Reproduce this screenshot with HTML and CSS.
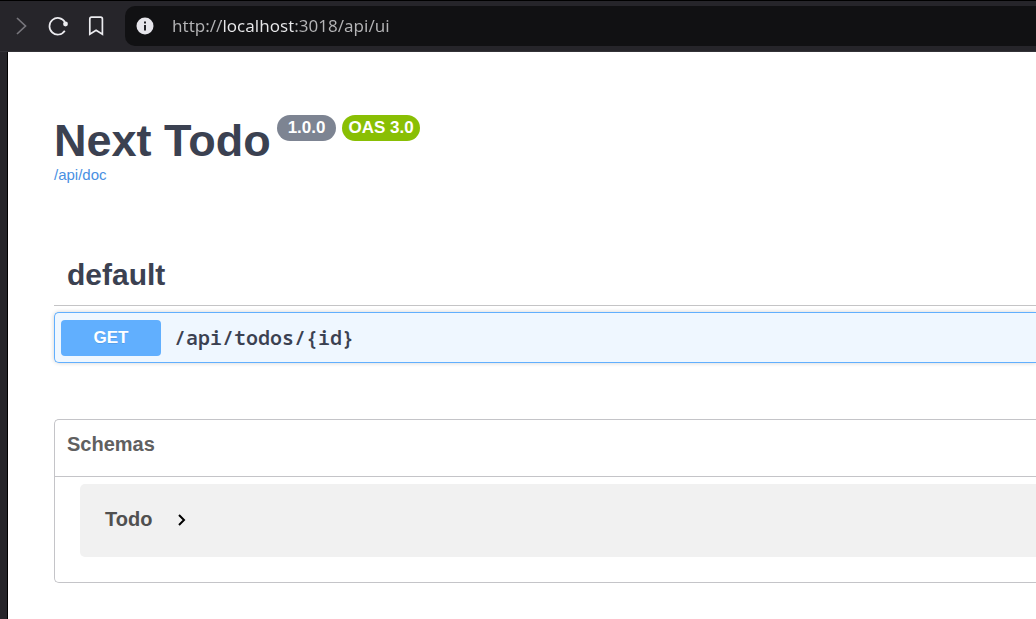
FILE: index.html
```html
<!DOCTYPE html>
<html lang="en">
<head>
<meta charset="utf-8">
<meta name="viewport" content="width=device-width, initial-scale=1">
<title>Next Todo</title>
<link rel="stylesheet" href="styles.css">
</head>
<body>
<header class="toolbar">
  <button class="tool forward" type="button" aria-label="Forward" disabled>
    <svg width="20" height="20" viewBox="0 0 20 20"><path d="M7 2l8.500 8L7 18"/></svg>
  </button>
  <button class="tool" type="button" aria-label="Reload">
    <svg width="20" height="20" viewBox="0 0 20 20"><path d="M16.800 14.700A8.300 8.300 0 1 1 16.900 6"/><circle class="dot" cx="17.500" cy="8" r="2.400"/></svg>
  </button>
  <button class="tool" type="button" aria-label="Bookmark">
    <svg width="20" height="20" viewBox="0 0 20 20"><path d="M3.800 18.300V3a1.800 1.800 0 0 1 1.800-1.800h9A1.800 1.800 0 0 1 16.400 3v15.300l-6.300-4.100z"/></svg>
  </button>
  <div class="address">
    <button class="site-info" type="button" aria-label="Site information">
      <svg width="18" height="18" viewBox="0 0 18 18"><circle cx="9" cy="9" r="8.500"/><path d="M8 4.500h2v2H8zM8 8h2v5.500H8z"/></svg>
    </button>
    <input class="url" type="text" aria-label="Address" value="http://localhost:3018/api/ui" spellcheck="false">
  </div>
</header>
<main class="page">
  <section class="info">
    <div class="heading">
      <h1 class="title">Next Todo</h1>
      <span class="badge version">1.0.0</span>
      <span class="badge oas">OAS 3.0</span>
    </div>
    <a class="doc-link" href="/api/doc">/api/doc</a>
  </section>
  <section class="group">
    <h2 class="tag">default</h2>
    <button class="operation" type="button">
      <span class="method">GET</span>
      <span class="path">/api/todos/{id}</span>
    </button>
  </section>
  <section class="schemas">
    <h2 class="schemas-title">Schemas</h2>
    <button class="model" type="button">
      Todo
      <svg width="10" height="16" viewBox="0 -2 10 16"><path d="M2 2l5 5-5 5"/></svg>
    </button>
  </section>
</main>
</body>
</html>
```
FILE: styles.css
```css
* {
  box-sizing: border-box;
}

body {
  margin: 0;
  min-height: 100vh;
  display: flex;
  flex-direction: column;
  background: #26252a;
  color: #3b4151;
  font-family: "Liberation Sans", Arial, sans-serif;
  overflow-x: hidden;
}

h1,
h2 {
  margin: 0;
}

button {
  border: 0;
  padding: 0;
  background: none;
  color: inherit;
  font: inherit;
}

svg {
  display: block;
}

.toolbar {
  display: flex;
  align-items: center;
  gap: 18px;
  height: 52px;
  padding-left: 10px;
  border-top: 1px solid #000;
  border-bottom: 1px solid #333237;
}

.tool {
  color: #ececf0;
}

.tool svg {
  fill: none;
  stroke: currentColor;
  stroke-width: 1.7;
}

.tool .dot {
  fill: currentColor;
  stroke: none;
}

.forward {
  color: #77767c;
}

.address {
  flex: 1;
  display: flex;
  align-items: center;
  gap: 18px;
  height: 40px;
  margin-left: 1px;
  padding-left: 11px;
  border-radius: 10px 0 0 10px;
  background: #111113;
}

.site-info circle {
  fill: #e6e5eb;
}

.site-info path {
  fill: #222126;
}

.url {
  flex: 1;
  min-width: 0;
  height: 30px;
  border: 0;
  padding: 0 0 2px;
  outline: 0;
  background: linear-gradient(90deg, #b4b4b6 49px, #e8e8ea 49px, #e8e8ea 121px, #b4b4b6 121px);
  background-clip: text;
  -webkit-background-clip: text;
  color: transparent;
  font: 17px "Noto Sans", sans-serif;
}

.page {
  flex: 1;
  margin-left: 7px;
  padding: 63px 0 36px 46px;
  border-left: 1px solid #000;
  background: #fff;
}

.heading {
  display: flex;
  align-items: flex-start;
  gap: 6px;
}

.title {
  font-size: 45px;
  line-height: 51px;
}

.badge {
  border-radius: 13px;
  color: #fff;
  font-size: 17px;
  font-weight: bold;
  line-height: 26px;
}

.version {
  padding: 0 11px;
  background: #7d8492;
}

.oas {
  padding: 0 6px;
  background: #89bf04;
}

.doc-link {
  display: block;
  width: fit-content;
  color: #4990e2;
  font-size: 15px;
  line-height: 18px;
  text-decoration: none;
}

.group {
  margin-top: 60px;
}

.tag {
  padding: 13px 0 13px 13px;
  border-bottom: 1px solid #c4c4c6;
  font-size: 30px;
  line-height: 35px;
}

.operation {
  display: flex;
  align-items: center;
  gap: 13px;
  width: 100%;
  height: 51px;
  margin-top: 6px;
  padding: 0 6px;
  border: 1px solid #61affe;
  border-right: 0;
  border-radius: 5px 0 0 5px;
  background: #eff7ff;
  box-shadow: 0 0 4px rgba(0, 0, 0, 0.19);
}

.method {
  width: 100px;
  border-radius: 4px;
  background: #61affe;
  color: #fff;
  font-size: 17px;
  font-weight: bold;
  line-height: 36px;
  text-shadow: 0 1px 0 rgba(0, 0, 0, 0.1);
}

.path {
  font: 600 20px "Noto Sans Mono", "DejaVu Sans Mono", monospace;
}

.schemas {
  margin-top: 56px;
  padding-bottom: 25px;
  border: 1px solid #c4c4c8;
  border-right: 0;
  border-radius: 5px 0 0 5px;
}

.schemas-title {
  padding: 12px 12px 20px;
  border-bottom: 1px solid #c4c4c8;
  color: #606060;
  font-size: 20px;
  line-height: 24px;
}

.model {
  display: flex;
  align-items: center;
  gap: 25px;
  width: calc(100% - 25px);
  margin: 7px 0 0 25px;
  padding: 23px 25px 26px;
  border-radius: 5px 0 0 5px;
  background: #f1f1f1;
  color: #505050;
  font-size: 20px;
  font-weight: bold;
  line-height: 24px;
}

.model path {
  fill: none;
  stroke: #000;
  stroke-width: 2;
}
```
